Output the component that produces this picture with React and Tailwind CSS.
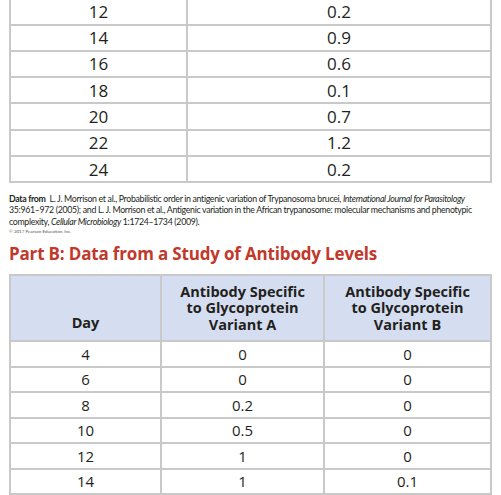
import React from "react";

const topRows = [
  ["12", "0.2"],
  ["14", "0.9"],
  ["16", "0.6"],
  ["18", "0.1"],
  ["20", "0.7"],
  ["22", "1.2"],
  ["24", "0.2"],
];

const bottomRows = [
  ["4", "0", "0"],
  ["6", "0", "0"],
  ["8", "0.2", "0"],
  ["10", "0.5", "0"],
  ["12", "1", "0"],
  ["14", "1", "0.1"],
];

export default function App() {
  return (
    <div
      className="w-[501px] h-[495px] overflow-hidden bg-white text-[#231f20]"
      style={{ fontFamily: '"Open Sans", "Noto Sans", sans-serif' }}
    >
      {/* Top table (continued) */}
      <div className="ml-[9px] w-[483px] border-x-2 border-[#c9c9c9]">
        {topRows.map((r, i) => (
          <div
            key={i}
            className={`flex border-b-2 border-[#c9c9c9] ${i === 0 ? "h-[25.5px]" : "h-[26.3px]"}`}
          >
            <div className="w-[177px] flex items-center justify-center border-r-2 border-[#c9c9c9] text-[17px] leading-none">
              {r[0]}
            </div>
            <div className="flex-1 flex items-center justify-center text-[17px] leading-none">
              {r[1]}
            </div>
          </div>
        ))}
      </div>

      {/* Caption */}
      <div
        className="ml-[9px] mt-[9.5px] w-[490px] text-[8.8px] leading-[11.7px] text-[#231f20] whitespace-nowrap tracking-[-0.33px]"
        style={{ fontFamily: 'Lato, "Open Sans", sans-serif' }}
      >
        <p>
          <span className="font-bold">Data from</span>&nbsp; L. J. Morrison et al., Probabilistic order in antigenic variation of Trypanosoma brucei,{" "}
          <i>International Journal for Parasitology</i>
        </p>
        <p>
          35:961–972 (2005); and L. J. Morrison et al., Antigenic variation in the African trypanosome: molecular mechanisms and phenotypic
        </p>
        <p>
          complexity, <i>Cellular Microbiology</i> 1:1724–1734 (2009).
        </p>
        <p className="text-[4.5px] leading-[7px] tracking-normal text-[#555]">© 2017 Pearson Education, Inc.</p>
      </div>

      {/* Heading */}
      <h2 className="ml-[9px] mt-[9.5px] text-[17px] leading-[20px] font-bold tracking-[-0.17px] text-[#c1392b]">
        Part B: Data from a Study of Antibody Levels
      </h2>

      {/* Bottom table */}
      <div className="ml-[9px] mt-[10px] w-[483px] border-x-2 border-t-2 border-[#c9c9c9]">
        <div className="flex h-[66px] bg-[#d5def0] border-b-2 border-[#c9c9c9] font-bold text-[14.5px] leading-[16.5px] text-center">
          <div className="w-[151px] flex items-end justify-center pb-[9px] border-r-2 border-[#c9c9c9]">
            Day
          </div>
          <div className="w-[163px] flex items-center justify-center border-r-2 border-[#c9c9c9]">
            Antibody Specific<br />to Glycoprotein<br />Variant A
          </div>
          <div className="flex-1 flex items-center justify-center">
            Antibody Specific<br />to Glycoprotein<br />Variant B
          </div>
        </div>
        {bottomRows.map((r, i) => (
          <div key={i} className="flex h-[25.5px] border-b-2 border-[#c9c9c9] text-[15px] leading-none">
            <div className="w-[151px] flex items-center justify-center border-r-2 border-[#c9c9c9]">{r[0]}</div>
            <div className="w-[163px] flex items-center justify-center border-r-2 border-[#c9c9c9]">{r[1]}</div>
            <div className="flex-1 flex items-center justify-center">{r[2]}</div>
          </div>
        ))}
        <div className="h-[8px]" />
      </div>
    </div>
  );
}
